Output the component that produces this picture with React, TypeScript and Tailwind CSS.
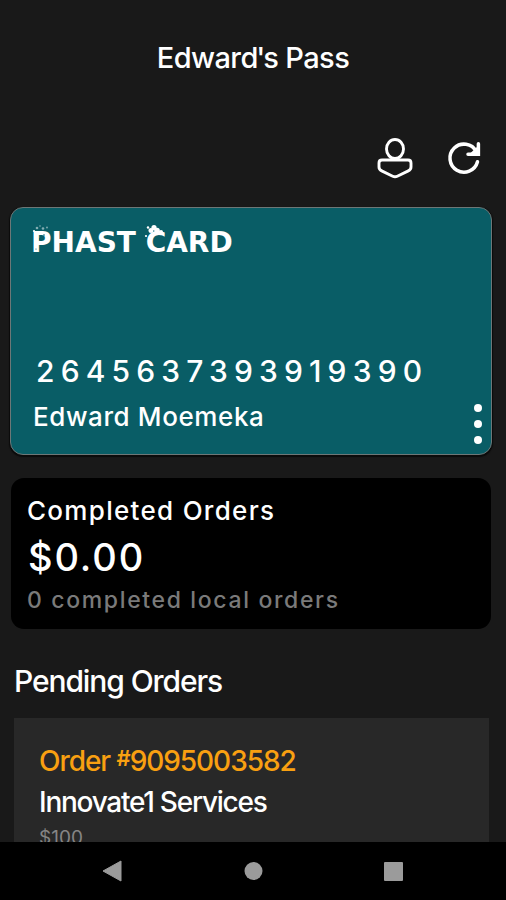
import type { ReactNode } from "react";

const pass = {
  title: "Edward's Pass",
  number: "2645637393919390",
  holder: "Edward Moemeka",
};

const order = {
  id: "9095003582",
  vendor: "Innovate1 Services",
  amount: "$100",
};

function IconButton({ label, children }: { label: string; children: ReactNode }) {
  return (
    <button type="button" aria-label={label} className="flex h-11 w-11 items-center justify-center text-white">
      {children}
    </button>
  );
}

function Header() {
  return (
    <header className="shrink-0">
      <h1 className="pt-[42px] text-center text-[29px] leading-8 font-medium tracking-[-0.600px]">
        Edward<span className="-mx-[1.500px]">'</span>s Pass
      </h1>
      <div className="mt-[62px] flex justify-end gap-[25px] pr-[20px]">
        <IconButton label="Profile">
          <svg width="44" height="44" viewBox="0 0 44 44" fill="none" stroke="currentColor" strokeWidth="2.9" strokeLinejoin="round">
            <ellipse cx="22" cy="13" rx="8.5" ry="9.500" />
            <path d="M9 24h26q3 0 3 3v4q0 2.600-2.700 3.900L24.300 40.200Q22 41.400 19.700 40.200L8.700 34.900Q6 33.600 6 31V27q0-3 3-3z" />
          </svg>
        </IconButton>
        <IconButton label="Refresh">
          <svg width="44" height="44" viewBox="0 0 44 44" fill="none" stroke="currentColor" strokeWidth="3.500">
            <path d="M35.500 25.800A14 14 0 1 1 34.300 15.500" strokeLinecap="round" />
            <path d="M36.400 7.800V18.200H26" strokeLinecap="round" />
            <path d="M28 17.500L35 11v7z" fill="currentColor" stroke="none" />
          </svg>
        </IconButton>
      </div>
    </header>
  );
}

function Logo() {
  return (
    <div className="relative -ml-px w-fit font-['DejaVu_Sans'] text-[28px] leading-8 font-bold whitespace-nowrap">
      PHAST CARD
      <svg className="absolute -top-1 left-0" width="150" height="34" viewBox="0 0 150 34" aria-hidden="true">
        <g fill="#fff">
          <circle cx="6" cy="5" r="1.300" opacity=".5" />
          <circle cx="9" cy="3" r=".8" opacity=".5" />
          <circle cx="12" cy="5.500" r="1.300" opacity=".5" />
          <circle cx="16" cy="4.500" r=".9" opacity=".5" />
          <circle cx="3" cy="8" r="1.100" />
          <circle cx="117" cy="4.500" r="1.200" />
          <circle cx="123" cy="4.500" r="2.600" />
          <circle cx="120" cy="7.500" r="2.500" />
          <circle cx="126" cy="7.500" r="2.800" />
          <circle cx="130" cy="9" r="2" />
          <circle cx="115" cy="13" r="1.100" />
        </g>
        <g fill="#095d66">
          <circle cx="9" cy="16" r="1" />
          <circle cx="13" cy="12" r=".8" />
          <circle cx="5" cy="26" r=".6" />
        </g>
      </svg>
    </div>
  );
}

function PassCard() {
  return (
    <section className="mt-[27px] mr-[14px] ml-[10px] flex h-[248px] shrink-0 flex-col rounded-[13px] border border-[#6d7777] bg-[#095d66] px-[21px] pt-[19px] shadow-[0_1px_1px_1px_#0b0b0b]">
      <Logo />
      <div className="mt-[96px] pl-1 text-[30px] leading-8 font-medium tracking-[6.150px]">{pass.number}</div>
      <div className="flex justify-between">
        <div className="mt-[14px] pl-px text-[26px] leading-8 font-medium tracking-[0.600px]">{pass.holder}</div>
        <button type="button" aria-label="Card options" className="mt-[17px] -mr-[12px] flex h-10 w-2 flex-col justify-between">
          <span className="h-2 w-2 rounded-full bg-white" />
          <span className="h-2 w-2 rounded-full bg-white" />
          <span className="h-2 w-2 rounded-full bg-white" />
        </button>
      </div>
    </section>
  );
}

function CompletedOrders() {
  return (
    <section className="mt-[23px] mr-[15px] ml-[11px] h-[151px] shrink-0 rounded-[13px] bg-black px-[16px] pt-[17px]">
      <h2 className="text-[26px] leading-8 font-medium tracking-[1.300px]">Completed Orders</h2>
      <p className="mt-2 pl-px text-[38px] leading-[44px] font-medium tracking-[1.900px]">$0.00</p>
      <p className="mt-[5px] text-[23px] leading-8 font-medium tracking-[1.650px] text-[#7a7a7a]">0 completed local orders</p>
    </section>
  );
}

function PendingOrders() {
  return (
    <section className="flex min-h-0 flex-1 flex-col overflow-hidden pt-[34px] pr-[17px] pl-[14px]">
      <h2 className="text-[30px] leading-9 font-medium tracking-[-1.100px]">Pending Orders</h2>
      <article className="mt-[19px] h-[180px] shrink-0 bg-[#282828] px-[25px] pt-[27px]">
        <div className="text-[28px] leading-8 font-medium tracking-[-1.050px] text-[#f9a011]">
          Order <span className="relative -top-[5px] text-[22px] font-semibold">#</span>
          {order.id}
        </div>
        <div className="mt-[7px] text-[28px] leading-8 font-medium tracking-[-1.250px]">{order.vendor}</div>
        <div className="mt-[6px] text-[19px] leading-7 text-[#858585]">{order.amount}</div>
      </article>
    </section>
  );
}

function SystemBar() {
  return (
    <nav className="flex h-[58px] shrink-0 justify-between bg-black px-[101px] pt-[18px] text-[#9b9b9b]">
      <svg width="22" height="22" viewBox="0 0 22 22" fill="currentColor">
        <path d="M2 11L20 1v20z" stroke="currentColor" strokeLinejoin="round" />
      </svg>
      <svg width="22" height="22" viewBox="0 0 22 22" fill="currentColor">
        <circle cx="11.500" cy="11" r="9" />
      </svg>
      <svg width="22" height="22" viewBox="0 0 22 22" fill="currentColor">
        <rect x="1" y="2" width="19" height="19" rx="1" />
      </svg>
    </nav>
  );
}

export default function App() {
  return (
    <main className="flex h-[900px] w-[506px] flex-col overflow-hidden bg-[#191919] font-['Inter',sans-serif] text-white">
      <Header />
      <PassCard />
      <CompletedOrders />
      <PendingOrders />
      <SystemBar />
    </main>
  );
}
